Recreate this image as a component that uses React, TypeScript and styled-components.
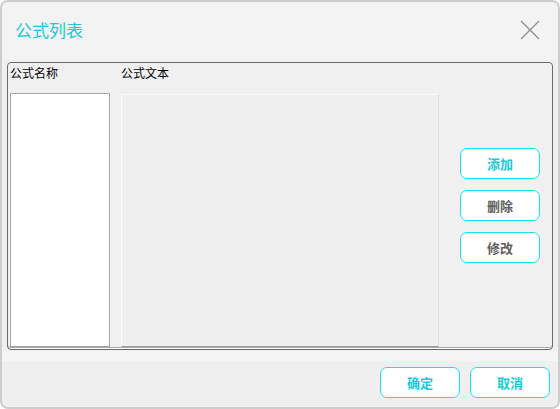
import React from "react";
import styled, { createGlobalStyle } from "styled-components";

const GlobalStyle = createGlobalStyle`
  html, body {
    margin: 0;
    padding: 0;
    background: #ffffff;
  }
  * {
    box-sizing: border-box;
  }
`;

const FONT = `"Noto Sans CJK SC", "Noto Sans", sans-serif`;
const CYAN = "#17cbd8";

const actions = [
  { label: "添加", accent: true },
  { label: "删除", accent: false },
  { label: "修改", accent: false },
];

const CloseIcon = () => (
  <svg width="20" height="20" viewBox="0 0 20 20">
    <path d="M1 1 L19 19 M19 1 L1 19" stroke="#8c8c8c" strokeWidth="1.2" fill="none" />
  </svg>
);

const App: React.FC = () => {
  return (
    <>
      <GlobalStyle />
      <Window>
        <Header>
          <Title>公式列表</Title>
          <CloseButton>
            <CloseIcon />
          </CloseButton>
        </Header>
        <GroupBox>
          <NameColumn>
            <Label>公式名称</Label>
            <NameList />
          </NameColumn>
          <TextColumn>
            <Label>公式文本</Label>
            <FormulaText />
          </TextColumn>
          <ActionColumn>
            {actions.map((a) => (
              <ActionButton key={a.label} $accent={a.accent}>
                {a.label}
              </ActionButton>
            ))}
          </ActionColumn>
        </GroupBox>
        <Footer>
          <ActionButton $accent>确定</ActionButton>
          <ActionButton $accent>取消</ActionButton>
        </Footer>
      </Window>
    </>
  );
};

const Window = styled.div`
  width: 560px;
  height: 409px;
  display: flex;
  flex-direction: column;
  background: #f0f0f0;
  border: 2px solid #cdcdcd;
  border-radius: 8px;
  overflow: hidden;
  font-family: ${FONT};
`;

const Header = styled.div`
  height: 58px;
  flex-shrink: 0;
  display: flex;
  align-items: center;
  justify-content: space-between;
  padding: 0 18px 0 13px;
  background: #f3f3f3;
`;

const Title = styled.div`
  color: ${CYAN};
  font-size: 17px;
  line-height: 20px;
  margin-top: -2px;
`;

const CloseButton = styled.div`
  width: 20px;
  height: 20px;
  display: flex;
  margin-top: -3px;
`;

const GroupBox = styled.div`
  height: 288px;
  margin: 2px 5px 0 5px;
  display: flex;
  padding: 0 2px 2px 2px;
  border: 1px solid #6a6a6a;
  border-radius: 4px;
  box-shadow: inset 0 -1px 0 #ffffff, inset 0 -2px 0 #a8a8a8;
  background: #f0f0f0;
`;

const NameColumn = styled.div`
  width: 100px;
  display: flex;
  flex-direction: column;
`;

const TextColumn = styled.div`
  width: 318px;
  margin-left: 11px;
  display: flex;
  flex-direction: column;
`;

const Label = styled.div`
  height: 20px;
  line-height: 20px;
  font-size: 12px;
  color: #000;
  margin-bottom: 10px;
`;

const NameList = styled.div`
  flex: 1;
  background: #ffffff;
  border: 1px solid #a4a4a4;
`;

const FormulaText = styled.div`
  flex: 1;
  margin-top: 1px;
  background: #efefef;
  border: 1px solid #dedede;
  border-top-color: #fafafa;
  border-left-color: #fafafa;
  border-bottom-color: #9c9c9c;
`;

const ActionColumn = styled.div`
  margin-left: 21px;
  align-self: center;
  display: flex;
  flex-direction: column;
  gap: 11px;
`;

const ActionButton = styled.div<{ $accent?: boolean }>`
  width: 80px;
  height: 31px;
  display: flex;
  align-items: center;
  justify-content: center;
  background: #ffffff;
  border: 1px solid #14e3ee;
  border-radius: 7px;
  font-size: 13px;
  font-weight: 700;
  color: ${(p) => (p.$accent ? CYAN : "#5e5e5e")};
`;

const Footer = styled.div`
  flex: 1;
  display: flex;
  justify-content: flex-end;
  align-items: flex-start;
  gap: 10px;
  padding: 16px 8px 0 0;
  margin-top: 1px;
  background: linear-gradient(#f5f5f5 0, #f5f5f5 10px, #efefef 10px);
`;

export default App;
